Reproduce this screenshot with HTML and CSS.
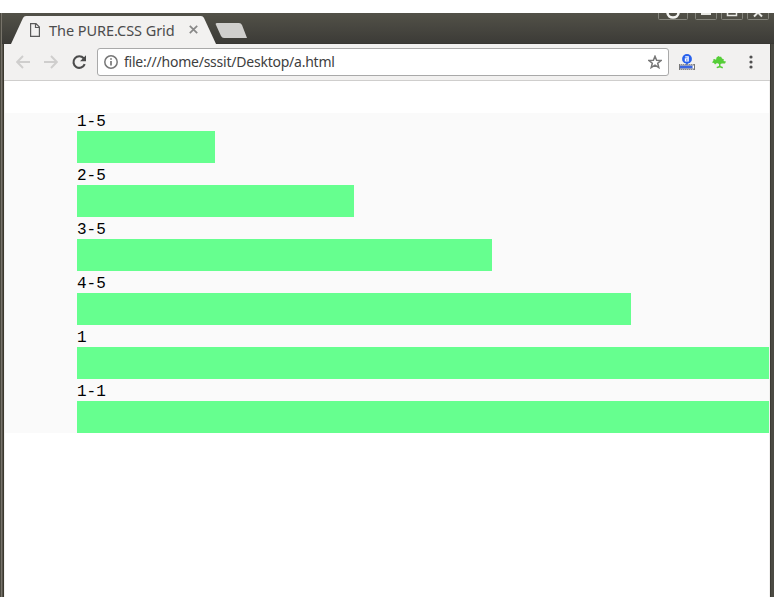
FILE: index.html
```html
<!DOCTYPE html>
<html lang="en">
<head>
<meta charset="utf-8">
<title>The PURE.CSS Grid</title>
<link rel="stylesheet" href="styles.css">
</head>
<body>
<div class="window">
  <header class="titlebar">
    <div class="tab">
      <svg class="tab-shape" width="206" height="29" viewBox="0 0 206 29"><path d="M0 29L12 3Q13 1 15 1H190Q192 1 193 3L205 29Z" fill="#f2f1f0"/></svg>
      <svg class="doc" width="10" height="14" viewBox="0 0 10 14" fill="none" stroke="#5a5a5a" stroke-width="1.2"><path d="M.6.6H6L9.400 4V13.400H.6ZM5.500.6V4.500H9.400"/></svg>
      <span class="tab-title">The PURE.CSS Grid</span>
      <svg class="tab-close" width="9" height="9" viewBox="0 0 9 9" stroke="#888" stroke-width="1.7"><path d="M.8.8L8.2 8.2M8.2.8L.8 8.2"/></svg>
    </div>
    <svg class="new-tab" width="33" height="16" viewBox="0 0 33 16"><path d="M2 0H24Q26 0 27 2L32 15H9Q7 15 6 13L1 2Q0 0 2 0Z" fill="#d0cfcd"/></svg>
    <svg class="controls" width="114" height="8" viewBox="0 0 114 8" fill="none" stroke="#85857d">
      <path d="M.5 0V5.5Q.5 6.5 1.5 6.5H28.5Q29.5 6.5 29.5 5.5V0M37.5 0V5.5Q37.5 6.5 38.5 6.5H57.5Q58.5 6.5 58.5 5.5V0M63.5 0V5.5Q63.5 6.5 64.5 6.5H83.5Q84.5 6.5 84.5 5.5V0M89.5 0V5.5Q89.5 6.5 90.5 6.5H109.5Q110.5 6.5 110.5 5.5V0"/>
      <path d="M9.5 0C10 6 20 6 20.5 0" stroke="#f5f5f2" stroke-width="2.6"/>
      <path d="M43 1H53" stroke="#e8e8e4" stroke-width="2"/>
      <path d="M69.500 0V2.500H78.500V0" stroke="#e8e8e4" stroke-width="1.500"/>
      <path d="M96 3.500L100 -.5L104 3.500" stroke="#e8e8e4" stroke-width="2"/>
    </svg>
  </header>
  <nav class="toolbar">
    <svg class="back" width="14" height="14" viewBox="0 0 14 14" fill="none" stroke="#cfcecd" stroke-width="1.900"><path d="M14 7H1.500M7 1L1.200 7L7 13"/></svg>
    <svg class="forward" width="14" height="14" viewBox="0 0 14 14" fill="none" stroke="#cfcecd" stroke-width="1.900"><path d="M0 7H12.500M7 1L12.800 7L7 13"/></svg>
    <svg class="reload" width="15" height="15" viewBox="0 0 15 15"><path d="M11.700 3.300A5.800 5.800 0 1 0 12.700 9.200" fill="none" stroke="#4b4b4b" stroke-width="2.100"/><path d="M14 .3V6.300H8Z" fill="#4b4b4b"/></svg>
    <div class="address">
      <svg class="info" width="14" height="14" viewBox="0 0 14 14"><circle cx="7" cy="7" r="6.200" fill="none" stroke="#777" stroke-width="1.500"/><path d="M7 6V10.500M7 3.300V4.800" stroke="#777" stroke-width="1.700"/></svg>
      <span class="url">file:///home/sssit/Desktop/a.html</span>
      <svg class="star" width="14" height="14" viewBox="0 0 14 14"><path d="M7 1.300L8.600 5.200L13 5.500L9.700 8.300L10.800 12.600L7 10.200L3.200 12.600L4.300 8.300L1 5.500L5.400 5.200Z" fill="none" stroke="#777" stroke-width="1.500"/></svg>
    </div>
    <svg class="badge" width="16" height="16" viewBox="0 0 16 16">
      <circle cx="8" cy="4.900" r="4.900" fill="#2761ed"/><path d="M6.200 2.800H9.200V7H6.400V4.900H9.200" fill="none" stroke="#fff" stroke-width="1.200"/><path d="M7 9.300H9V11H7Z" fill="#2761ed"/>
      <path d="M.5 10V16M15.500 10V16" stroke="#777"/><path d="M1 11.500H13.500V14.500H1Z" fill="#3a67e3"/><path d="M14 11.500H15V14.500H14Z" fill="#fff"/><path d="M1 15H15M1 11H15" stroke="#8b8f9c"/><path d="M2 15.500H15M2 10.500H15" stroke="#8b8b8b" stroke-dasharray="1 1"/>
    </svg>
    <svg class="tree" width="14" height="13" viewBox="0 0 14 13" fill="#55ce37"><path d="M4.500 1.500L6.500 0L8 1L9 .5L10 2.500L12 3.500L11.500 5L14 5.500L13 7.500H10L8.500 8V10L11 11L10.500 12.500L8 11.500L5 12.200L4.500 11L7 10V8L5 7L3 8.500L2 7L0 6.500L1.500 4.500L1 3.500L3 3L4 4Z"/></svg>
    <svg class="menu" width="4" height="14" viewBox="0 0 4 14" fill="#505050"><circle cx="2" cy="2" r="1.600"/><circle cx="2" cy="7" r="1.600"/><circle cx="2" cy="12" r="1.600"/></svg>
  </nav>
  <main class="page">
    <div class="grid">
      <p>1-5</p><div class="bar one-fifth"></div>
      <p>2-5</p><div class="bar two-fifths"></div>
      <p>3-5</p><div class="bar three-fifths"></div>
      <p>4-5</p><div class="bar four-fifths"></div>
      <p>1</p><div class="bar"></div>
      <p>1-1</p><div class="bar"></div>
    </div>
  </main>
</div>
</body>
</html>
```
FILE: styles.css
```css
* { box-sizing: border-box; }
body { margin: 0; padding: 13px 0; background: #fff; }
svg { display: block; flex: none; }
.window {
  height: 584px;
  padding: 0 4px;
  display: flex;
  flex-direction: column;
  background:
    linear-gradient(90deg, #4b4940 1px, #77736a 1px 2px, #55524a 2px 3px, #3b382e 3px) 0 0 / 4px 100% no-repeat,
    linear-gradient(90deg, #3c3b35 1px, #4b4a43 1px) 100% 0 / 4px 100% no-repeat;
}
.titlebar {
  height: 31px;
  margin: 0 -4px 0 -2px;
  padding-left: 9px;
  flex: none;
  display: flex;
  align-items: flex-start;
  background: linear-gradient(#525148, #3c3b37 30px, #343330);
}
.tab {
  position: relative;
  width: 206px;
  height: 29px;
  margin-top: 2px;
  padding-left: 19px;
  display: flex;
  align-items: center;
}
.tab-shape { position: absolute; left: 0; top: 0; }
.doc, .tab-title, .tab-close { position: relative; }
.tab-title {
  width: 126px;
  margin-left: 9px;
  color: #4c4c4c;
  font: 14.5px/20px "Noto Sans", sans-serif;
  letter-spacing: -0.06px;
  white-space: nowrap;
}
.tab-close { margin-left: 14px; }
.new-tab { margin: 10px 0 0 -2px; }
.controls { margin-left: auto; margin-right: 2px; }
.toolbar {
  height: 37px;
  flex: none;
  display: flex;
  align-items: center;
  padding: 0 17px 0 12px;
  background: #f2f1f0;
  border-bottom: 1px solid #cfcecd;
}
.forward { margin-left: 14px; }
.reload { margin-left: 14px; }
.address {
  width: 572px;
  height: 28px;
  margin-left: 10px;
  padding: 0 6px;
  display: flex;
  align-items: center;
  background: #fff;
  border: 1px solid #a9a9a9;
  border-radius: 3px;
}
.url {
  margin-left: 6px;
  color: #404040;
  font: 14px/20px "Noto Sans", sans-serif;
  letter-spacing: -0.23px;
  white-space: nowrap;
}
.star { margin-left: auto; }
.badge { margin-left: 10px; }
.tree { margin-left: 17px; }
.menu { margin-left: auto; }
.page {
  flex: 1;
  padding-top: 32px;
  background: #fff;
  border: solid #f2f1f0;
  border-width: 0 1px;
}
.grid { padding-left: 72px; background: #fafafa; }
.grid p {
  margin: 0;
  color: #000;
  font: 16px/18px "Liberation Mono", monospace;
}
.bar { height: 32px; background: #66ff8f; }
.bar + p { margin-top: 4px; }
.one-fifth { width: 20%; }
.two-fifths { width: 40%; }
.three-fifths { width: 60%; }
.four-fifths { width: 80%; }
```
